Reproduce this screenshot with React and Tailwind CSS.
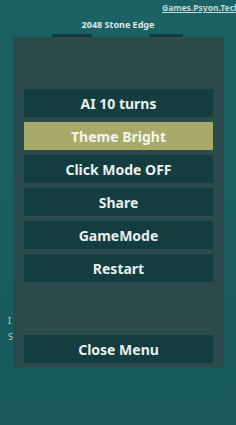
export default function App() {
  const items = [
    { label: "AI 10 turns", active: false },
    { label: "Theme Bright", active: true },
    { label: "Click Mode OFF", active: false },
    { label: "Share", active: false },
    { label: "GameMode", active: false },
    { label: "Restart", active: false },
  ];
  return (
    <div
      className="relative w-[236px] h-[425px] overflow-hidden bg-gradient-to-b from-[#1b6264] to-[#185a5c]"
      style={{ fontFamily: '"Noto Sans", "Open Sans", sans-serif' }}
    >
      {/* background page */}
      <div className="flex flex-col">
        <div className="h-[19px] pt-[2px] pl-[162px] whitespace-nowrap text-[8.5px] font-bold leading-[12px]">
          <a className="text-[#c6d9d9] underline">Games.Psyon.Tech</a>
        </div>
        <div className="text-center text-[9px] font-bold leading-[12px] text-[#dde8e8]">
          2048 Stone Edge
        </div>
        <div className="flex mt-[3px] h-[4px]">
          <div className="ml-[52px] w-[40px] bg-[#123c3d]" />
          <div className="ml-[57px] w-[34px] bg-[#123c3d]" />
        </div>
        <div className="flex flex-col pl-[8px] mt-[276px] gap-[3px] text-[9px] leading-[13px] text-[#b9d0d0]">
          <span>I</span>
          <span>S</span>
        </div>
      </div>

      {/* overlay menu */}
      <div className="absolute left-[13px] top-[37px] w-[211px] h-[331px] bg-[#2b4a4b] flex flex-col px-[11px] pt-[52px] pb-[5px]">
        <div className="flex flex-col gap-[5px]">
          {items.map((it) => (
            <button
              key={it.label}
              className={`h-[28px] w-full flex items-center justify-center text-[14px] font-bold ${
                it.active ? "bg-[#a8aa6a] text-[#f4f4ec]" : "bg-[#133d3e] text-[#e9efef]"
              }`}
            >
              {it.label}
            </button>
          ))}
        </div>
        <div className="flex-1" />
        <button className="h-[28px] w-full flex items-center justify-center text-[14px] font-bold bg-[#133d3e] text-[#e9efef]">
          Close Menu
        </button>
      </div>
    </div>
  );
}
